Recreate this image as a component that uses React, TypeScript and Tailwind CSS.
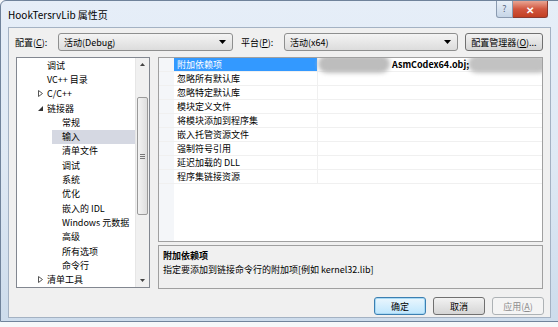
import React from "react";

const font = { fontFamily: '"Noto Sans CJK SC", "Liberation Sans", sans-serif' };

interface TreeItem {
  label: string;
  level: number;
  arrow?: "closed" | "open";
  selected?: boolean;
}

const treeItems: TreeItem[] = [
  { label: "调试", level: 1 },
  { label: "VC++ 目录", level: 1 },
  { label: "C/C++", level: 0, arrow: "closed" },
  { label: "链接器", level: 0, arrow: "open" },
  { label: "常规", level: 2 },
  { label: "输入", level: 2, selected: true },
  { label: "清单文件", level: 2 },
  { label: "调试", level: 2 },
  { label: "系统", level: 2 },
  { label: "优化", level: 2 },
  { label: "嵌入的 IDL", level: 2 },
  { label: "Windows 元数据", level: 2 },
  { label: "高级", level: 2 },
  { label: "所有选项", level: 2 },
  { label: "命令行", level: 2 },
  { label: "清单工具", level: 0, arrow: "closed" },
];

const gridRows = [
  "附加依赖项",
  "忽略所有默认库",
  "忽略特定默认库",
  "模块定义文件",
  "将模块添加到程序集",
  "嵌入托管资源文件",
  "强制符号引用",
  "延迟加载的 DLL",
  "程序集链接资源",
];

function Combo({ text, width }: { text: string; width: string }) {
  return (
    <div
      className={`${width} h-[18px] flex items-center justify-between rounded-[3px] border border-[#8e8f8f] bg-gradient-to-b from-[#f4f4f4] to-[#dcdcdc] pl-[5px] pr-[6px]`}
    >
      <span className="text-[9px] text-black leading-none whitespace-nowrap">{text}</span>
      <svg width="7" height="4" viewBox="0 0 7 4">
        <path d="M0 0h7L3.5 4z" fill="#000" />
      </svg>
    </div>
  );
}

function Btn({
  children,
  width,
  primary,
  disabled,
}: {
  children: React.ReactNode;
  width: string;
  primary?: boolean;
  disabled?: boolean;
}) {
  return (
    <div
      className={`${width} h-[18px] flex items-center justify-center rounded-[3px] border text-[9px] leading-none whitespace-nowrap ${
        primary
          ? "border-[#3c7fb1] bg-gradient-to-b from-[#eaf6fd] to-[#bee6fd] text-black shadow-[inset_0_0_0_1px_#a7d9f5]"
          : disabled
          ? "border-[#adb2b5] bg-[#f4f4f4] text-[#8d8d8d]"
          : "border-[#707070] bg-gradient-to-b from-[#f2f2f2] to-[#d5d5d5] text-black"
      }`}
    >
      {children}
    </div>
  );
}

function TreeArrow({ kind }: { kind: "closed" | "open" }) {
  if (kind === "closed") {
    return (
      <svg width="5" height="7" viewBox="0 0 5 7" className="w-[5px] shrink-0">
        <path d="M0.5 0.5L4.5 3.5L0.5 6.5z" fill="none" stroke="#555" strokeWidth="1" />
      </svg>
    );
  }
  return (
    <svg width="5" height="5" viewBox="0 0 5 5" className="w-[5px] shrink-0">
      <path d="M5 0V5H0z" fill="#333" />
    </svg>
  );
}

export default function App() {
  return (
    <div className="w-[558px] h-[327px] bg-[#f6f8fa] overflow-hidden" style={font}>
      <div className="w-[566px] h-[322px] flex flex-col rounded-t-[6px] border border-[#70839b] bg-gradient-to-b from-[#e6eef8] via-[#dfe9f4] to-[#cddcec]">
        {/* title bar */}
        <div className="h-[26px] flex items-start justify-between pl-[7px] pr-[17px]">
          <div className="pt-[9px] text-[10px] leading-none text-black">HookTersrvLib 属性页</div>
          <div className="flex">
            <div className="w-[17px] h-[17px] flex items-center justify-center rounded-bl-[3px] border border-t-0 border-[#8a9ab0] bg-gradient-to-b from-[#e9f0f8] to-[#c6d5e7] text-[9px] text-[#5a6a80]">
              ?
            </div>
            <div className="w-[35px] h-[17px] flex items-center justify-center rounded-br-[3px] border border-t-0 border-l-0 border-[#8a3a30] bg-gradient-to-b from-[#e8a493] via-[#d1563f] to-[#c23f22] text-[10px] font-bold text-white">
              ✕
            </div>
          </div>
        </div>
        {/* client area */}
        <div className="ml-[7px] w-[543px] h-[291px] border border-[#a4b2c3] bg-[#f0f0f0] flex flex-col">
          {/* config row */}
          <div className="flex items-center h-[18px] mt-[5px] pl-[6px]">
            <span className="w-[43px] text-[9px] leading-none whitespace-nowrap">
              配置(<u>C</u>):
            </span>
            <Combo text="活动(Debug)" width="w-[175px]" />
            <span className="ml-[8px] w-[43px] text-[9px] leading-none whitespace-nowrap">
              平台(<u>P</u>):
            </span>
            <Combo text="活动(x64)" width="w-[174px]" />
            <div className="ml-[7px]">
              <Btn width="w-[78px]">
                配置管理器(<u>O</u>)...
              </Btn>
            </div>
          </div>
          {/* main */}
          <div className="flex mt-[6px] pl-[7px]">
            {/* tree */}
            <div className="w-[134px] h-[231px] border border-[#828790] bg-white flex">
              <div className="flex-1 overflow-hidden">
                {treeItems.map((item, i) => (
                  <div
                    key={i}
                    className="h-[14.3px] flex items-center text-[9px] leading-none text-black whitespace-nowrap"
                    style={{
                      paddingLeft: item.level === 0 ? 21 : item.level === 1 ? 20 : 35,
                    }}
                  >
                    {item.arrow && <TreeArrow kind={item.arrow} />}
                    <span
                      className={`h-[14px] flex-1 flex items-center ${
                        item.arrow ? "pl-[4px]" : "pl-[10px]"
                      } ${item.selected ? "bg-[#d5d8e2]" : ""}`}
                    >
                      {item.label}
                    </span>
                  </div>
                ))}
              </div>
              <div className="w-[14px] bg-[#f0f0f0] border-l border-[#e6e6e6] flex flex-col items-center">
                <div className="h-[13px] flex items-center justify-center">
                  <svg width="5" height="3" viewBox="0 0 5 3">
                    <path d="M0 3L2.5 0L5 3z" fill="#444" />
                  </svg>
                </div>
                <div className="mt-[26px] w-[11px] h-[118px] rounded-[2px] border border-[#9a9a9a] bg-gradient-to-r from-[#f3f3f3] to-[#dedede] flex items-center justify-center">
                  <div className="flex flex-col gap-[1px]">
                    <div className="w-[5px] h-px bg-[#777]" />
                    <div className="w-[5px] h-px bg-[#777]" />
                    <div className="w-[5px] h-px bg-[#777]" />
                  </div>
                </div>
                <div className="flex-1" />
                <div className="h-[13px] flex items-center justify-center">
                  <svg width="5" height="3" viewBox="0 0 5 3">
                    <path d="M0 0L2.5 3L5 0z" fill="#444" />
                  </svg>
                </div>
              </div>
            </div>
            {/* right column */}
            <div className="ml-[8px] flex flex-col">
              <div className="w-[385px] h-[185px] border border-[#a0a0a0] bg-white flex flex-col overflow-hidden">
                {gridRows.map((name, i) => (
                  <div key={i} className="h-[14px] flex border-b border-[#f0f0f0]">
                    <div className="w-[15px] bg-[#f4f6f9]" />
                    <div
                      className={`w-[144px] flex items-center pl-[3px] text-[9px] leading-none whitespace-nowrap border-r border-[#f0f0f0] ${
                        i === 0 ? "bg-[#3399ff] text-white" : "text-black"
                      }`}
                    >
                      {name}
                    </div>
                    <div className="flex-1 relative flex items-center text-[9px] leading-none">
                      {i === 0 && (
                        <>
                          <div className="absolute left-[0px] top-[-3px] w-[72px] h-[18px] rounded-full bg-[#bdbdbd] blur-[2px]" />
                          <div className="absolute left-[150px] top-[-3px] w-[80px] h-[18px] rounded-full bg-[#c2c2c2] blur-[2px]" />
                          <span className="relative ml-[74px] font-bold whitespace-nowrap">
                            AsmCodex64.obj;
                          </span>
                        </>
                      )}
                    </div>
                  </div>
                ))}
                <div className="flex-1 flex">
                  <div className="w-[15px] bg-[#f4f6f9]" />
                </div>
              </div>
              <div className="mt-[3px] w-[385px] h-[44px] border border-[#a0a0a0] bg-[#f0f0f0] px-[4px] pt-[3px] text-[9px] leading-[14px]">
                <div className="font-bold">附加依赖项</div>
                <div>指定要添加到链接命令行的附加项[例如 kernel32.lib]</div>
              </div>
            </div>
          </div>
          {/* buttons */}
          <div className="flex justify-end gap-[7px] mt-[8px] pr-[6px]">
            <Btn width="w-[52px]" primary>
              确定
            </Btn>
            <Btn width="w-[52px]">取消</Btn>
            <Btn width="w-[52px]" disabled>
              应用(<u>A</u>)
            </Btn>
          </div>
        </div>
      </div>
    </div>
  );
}
